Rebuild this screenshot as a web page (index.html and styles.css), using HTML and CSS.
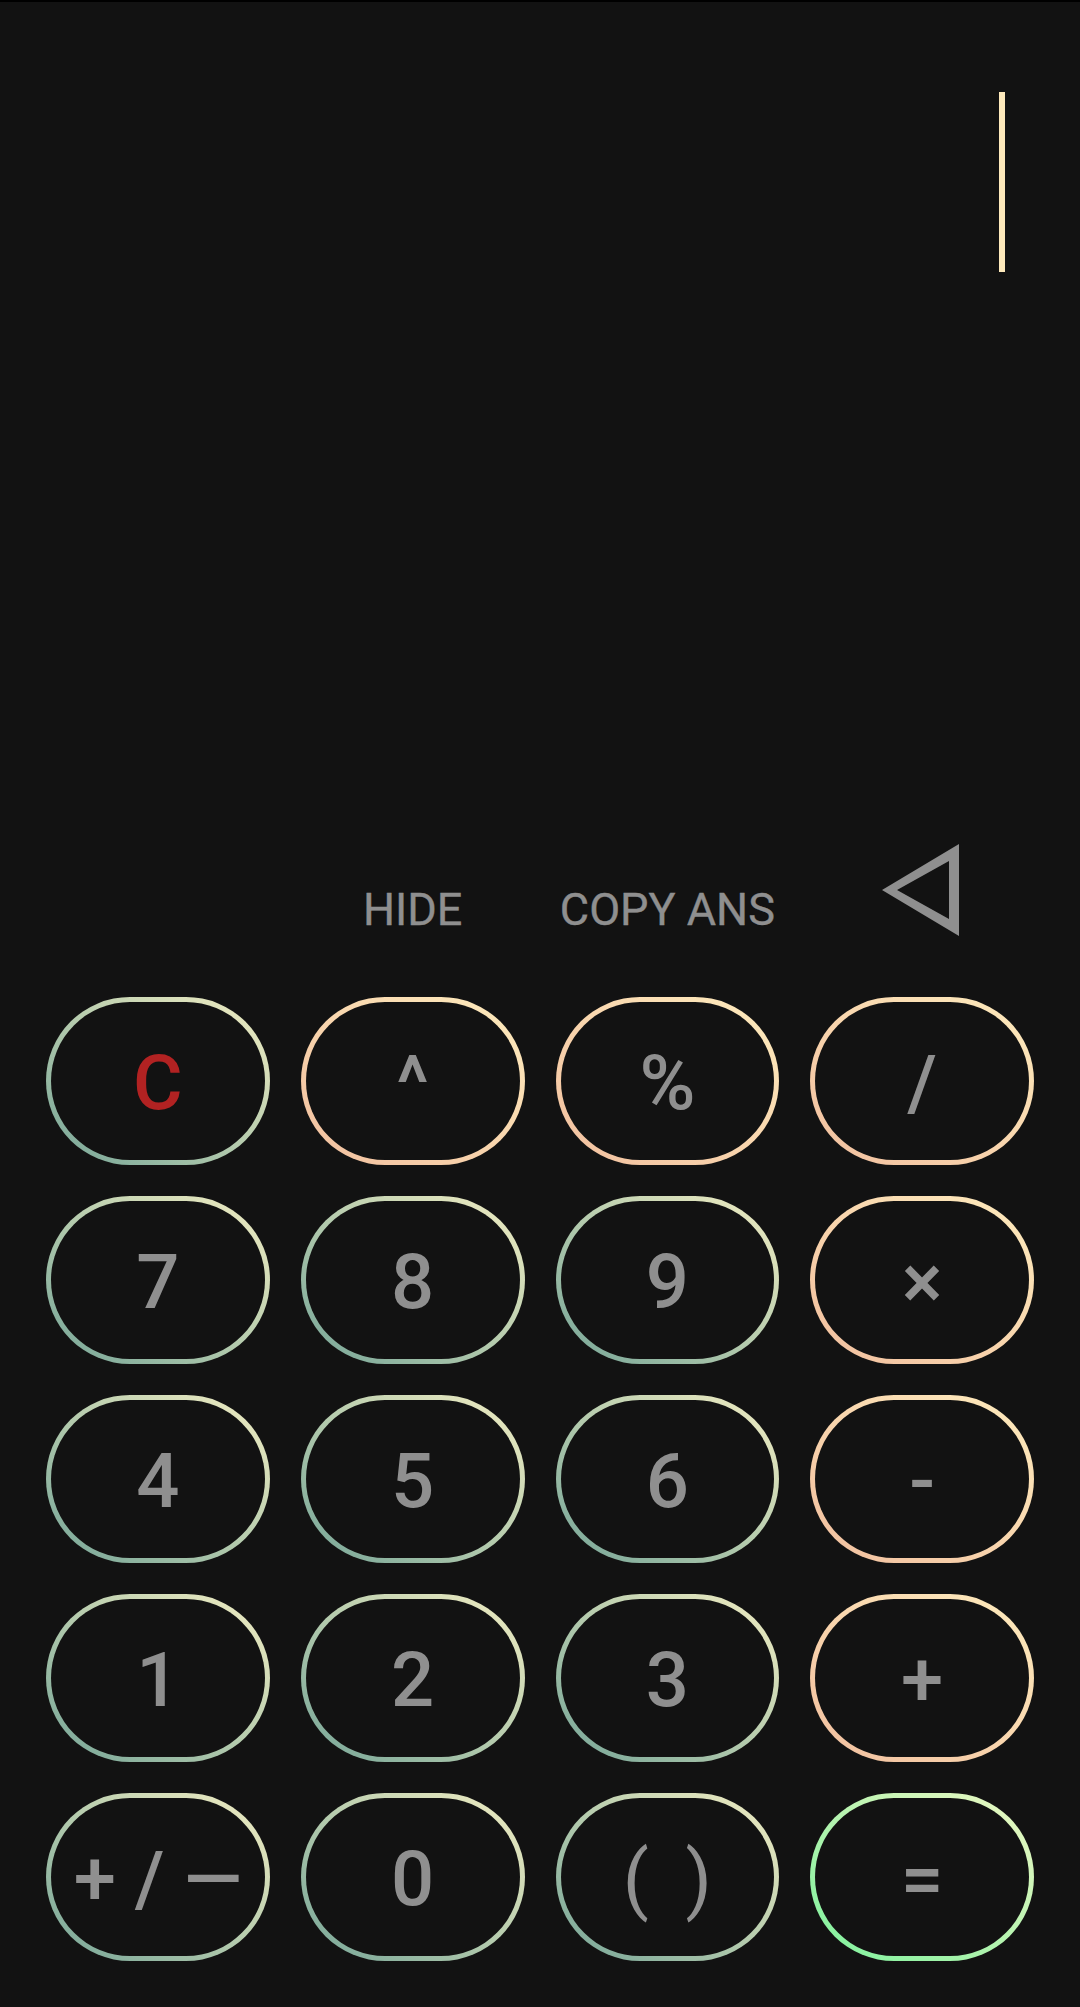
FILE: index.html
```html
<!DOCTYPE html>
<html lang="en">
<head>
<meta charset="utf-8">
<title>Calculator</title>
<link rel="stylesheet" href="styles.css">
</head>
<body>
<div class="app">
  <section class="display">
    <span class="cursor"></span>
  </section>
  <nav class="actions">
    <span class="action-slot"></span>
    <button class="action">HIDE</button>
    <button class="action">COPY ANS</button>
    <button class="action back" aria-label="Backspace">
      <svg class="back-icon" viewBox="0 1 82 92" width="82" height="92">
        <path fill-rule="evenodd" d="M2 47 L79 1 L79 93 Z M17 47 L69 76 L69 18 Z"/>
      </svg>
    </button>
  </nav>
  <section class="keypad">
    <button class="key num clear">C</button>
    <button class="key op">^</button>
    <button class="key op">%</button>
    <button class="key op">/</button>

    <button class="key num">7</button>
    <button class="key num">8</button>
    <button class="key num">9</button>
    <button class="key op">×</button>

    <button class="key num">4</button>
    <button class="key num">5</button>
    <button class="key num">6</button>
    <button class="key op">-</button>

    <button class="key num">1</button>
    <button class="key num">2</button>
    <button class="key num">3</button>
    <button class="key op">+</button>

    <button class="key num">+ / —</button>
    <button class="key num">0</button>
    <button class="key num parens">( )</button>
    <button class="key eq">=</button>
  </section>
</div>
</body>
</html>
```

FILE: styles.css
```css
* { box-sizing: border-box; }

html, body {
  margin: 0;
  padding: 0;
  background: #121212;
}

body {
  font-family: Roboto, "Liberation Sans", sans-serif;
  color: #8f8f8f;
}

.app {
  height: 2007px;
  display: flex;
  flex-direction: column;
  border-top: 2px solid #000;
}

.display {
  flex: 0 0 842px;
  display: flex;
  justify-content: flex-end;
  align-items: flex-start;
  padding: 90px 75px 0 0;
}

.cursor {
  display: block;
  width: 6px;
  height: 180px;
  background: #fde9bb;
}

.actions {
  flex: 0 0 auto;
  height: 92px;
  min-height: 0;
  margin-bottom: 61px;
  padding: 0 46px;
  display: grid;
  grid-template-columns: repeat(4, 1fr);
  grid-template-rows: 92px;
  column-gap: 31px;
  align-items: end;
}

.action {
  background: none;
  border: 0;
  padding: 0;
  margin: 0 0 4px;
  justify-self: center;
  font-family: inherit;
  font-size: 45px;
  line-height: 1;
  font-weight: 400;
  color: #8f8f8f;
  -webkit-text-stroke: 0.4px #8f8f8f;
}

.action.back {
  align-self: stretch;
  margin: 0 0 0 -3px;
  display: flex;
  align-items: center;
}

.back-icon {
  display: block;
  fill: #8f8f8f;
}

.keypad {
  flex: 0 0 auto;
  padding: 0 46px 46px;
  display: grid;
  grid-template-columns: repeat(4, 1fr);
  grid-auto-rows: 168px;
  gap: 31px;
}

.key {
  margin: 0;
  padding: 4px 0 0;
  border: 5px solid transparent;
  border-radius: 999px;
  font-family: inherit;
  font-size: 76px;
  font-weight: 500;
  line-height: 1;
  color: #8f8f8f;
  display: flex;
  align-items: center;
  justify-content: center;
}

.num {
  background:
    linear-gradient(#121212, #121212) padding-box,
    linear-gradient(to top right, #74a497, #b6ccae 50%, #f2edc3) border-box;
}

.op {
  background:
    linear-gradient(#121212, #121212) padding-box,
    linear-gradient(to top right, #f1bf9f, #f9d6ae 50%, #fdebbd) border-box;
}

.eq {
  background:
    linear-gradient(#121212, #121212) padding-box,
    linear-gradient(to top right, #7cf29c, #b6f4b0 50%, #eef8c4) border-box;
}

.clear {
  color: #b22222;
}

.parens {
  font-weight: 400;
  word-spacing: 18px;
}
```
